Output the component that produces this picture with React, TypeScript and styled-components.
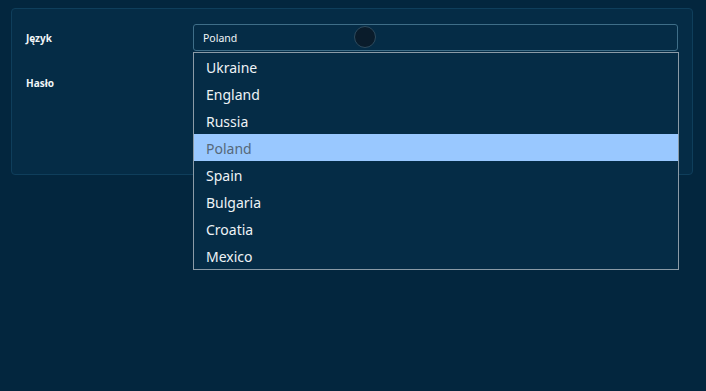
import React from "react";
import styled, { createGlobalStyle } from "styled-components";

const Global = createGlobalStyle`
  html, body { margin: 0; padding: 0; }
  body {
    width: 706px;
    height: 391px;
    background: #03263e;
    font-family: "Noto Sans", "Open Sans", sans-serif;
    overflow: hidden;
  }
`;

const Page = styled.div`
  padding: 8px 13px 0 11px;
`;

const Card = styled.div`
  box-sizing: border-box;
  height: 167px;
  background: #052c46;
  border: 1px solid #0f3e5b;
  border-radius: 4px;
  padding: 15px 14px 0 14px;
  display: grid;
  grid-template-columns: 167px 1fr;
  grid-auto-rows: 27px;
  row-gap: 18px;
  align-items: center;
`;

const Label = styled.div`
  font-size: 10px;
  font-weight: 700;
  color: #f2f6f8;
`;

const Field = styled.div`
  position: relative;
  height: 27px;
`;

const SelectBox = styled.div`
  box-sizing: border-box;
  height: 27px;
  border: 1px solid #3f6e88;
  border-radius: 3px;
  background: #052c46;
  display: flex;
  align-items: center;
  padding-left: 9px;
  font-size: 10.5px;
  color: #f2f6f8;
`;

const Cursor = styled.div`
  position: absolute;
  left: 161px;
  top: 2px;
  width: 20px;
  height: 20px;
  border-radius: 50%;
  background: #0a1c2b;
  border: 1px solid #2d4a5d;
`;

const List = styled.ul`
  position: absolute;
  left: 0;
  top: 28px;
  right: -1px;
  margin: 0;
  padding: 0;
  list-style: none;
  background: #052c46;
  border: 1px solid #8b9ba7;
  z-index: 5;
`;

const Option = styled.li<{ $active?: boolean }>`
  box-sizing: border-box;
  height: 27px;
  display: flex;
  align-items: center;
  padding: 1px 0 0 12px;
  font-size: 14px;
  color: ${(p) => (p.$active ? "#56687a" : "#eef3f6")};
  background: ${(p) => (p.$active ? "#99c8ff" : "transparent")};
`;

const countries = ["Ukraine", "England", "Russia", "Poland", "Spain", "Bulgaria", "Croatia", "Mexico"];

export default function App() {
  return (
    <>
      <Global />
      <Page>
        <Card>
          <Label>Język</Label>
          <Field>
            <SelectBox>Poland</SelectBox>
            <Cursor />
            <List>
              {countries.map((c) => (
                <Option key={c} $active={c === "Poland"}>
                  {c}
                </Option>
              ))}
            </List>
          </Field>
          <Label>Hasło</Label>
          <Field />
        </Card>
      </Page>
    </>
  );
}
